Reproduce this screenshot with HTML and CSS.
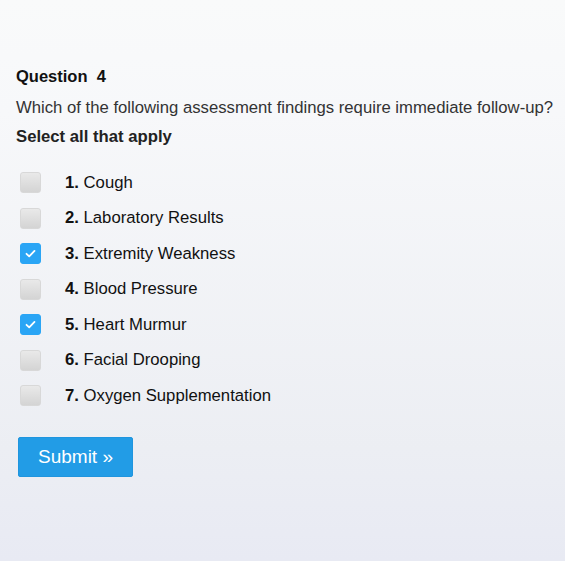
FILE: index.html
```html
<!DOCTYPE html>
<html>
<head>
<meta charset="utf-8">
<link rel="stylesheet" href="styles.css">
</head>
<body>
<div class="quiz">
  <h2 class="qtitle">Question&nbsp; 4</h2>
  <p class="qtext">Which of the following assessment findings require immediate follow-up?</p>
  <p class="qhint">Select all that apply</p>
  <ul class="options">
    <li class="opt"><span class="box"></span><span class="label"><b>1.</b> Cough</span></li>
    <li class="opt"><span class="box"></span><span class="label"><b>2.</b> Laboratory Results</span></li>
    <li class="opt"><span class="box checked"><svg viewBox="0 0 21 21" width="21" height="21"><path d="M6.5 10.8 L9.2 13.4 L14.5 7.9" fill="none" stroke="#fff" stroke-width="1.8" stroke-linecap="round" stroke-linejoin="round"/></svg></span><span class="label"><b>3.</b> Extremity Weakness</span></li>
    <li class="opt"><span class="box"></span><span class="label"><b>4.</b> Blood Pressure</span></li>
    <li class="opt"><span class="box checked"><svg viewBox="0 0 21 21" width="21" height="21"><path d="M6.5 10.8 L9.2 13.4 L14.5 7.9" fill="none" stroke="#fff" stroke-width="1.8" stroke-linecap="round" stroke-linejoin="round"/></svg></span><span class="label"><b>5.</b> Heart Murmur</span></li>
    <li class="opt"><span class="box"></span><span class="label"><b>6.</b> Facial Drooping</span></li>
    <li class="opt"><span class="box"></span><span class="label"><b>7.</b> Oxygen Supplementation</span></li>
  </ul>
  <button class="submit">Submit &raquo;</button>
</div>
</body>
</html>
```
FILE: styles.css
```css
html, body {
  margin: 0;
  padding: 0;
  height: 100%;
}
body {
  background: linear-gradient(to bottom, #f9fafa 0%, #f7f8fa 20%, #eceef3 80%, #e8eaf3 100%);
  font-family: "Liberation Sans", Arial, sans-serif;
  color: #222;
}
.quiz {
  padding: 66px 16px 0 16px;
}
.qtitle {
  margin: 0;
  font-size: 16.5px;
  font-weight: bold;
  color: #111;
  line-height: 20px;
}
.qtext {
  margin: 12px 0 0 0;
  font-size: 16.7px;
  line-height: 20px;
  color: #333;
  white-space: nowrap;
}
.qhint {
  margin: 9px 0 0 0;
  font-size: 16.7px;
  font-weight: bold;
  line-height: 20px;
  color: #222;
}
.options {
  list-style: none;
  margin: 18px 0 0 0;
  padding: 0;
}
.opt {
  display: flex;
  align-items: center;
  height: 35.5px;
}
.box {
  width: 21px;
  height: 21px;
  margin-left: 4px;
  border-radius: 3px;
  border: 1px solid #d8d8d8;
  background: linear-gradient(to bottom, #e9e9e9, #d4d4d4);
  box-sizing: border-box;
  display: flex;
}
.box.checked {
  background: #2aa5f5;
  border-color: #2aa5f5;
}
.box svg {
  display: block;
  margin: -1px;
}
.label {
  margin-left: 24px;
  font-size: 16.7px;
  color: #111;
}
.submit {
  margin: 23px 0 0 2px;
  width: 115px;
  height: 40px;
  background: #229ce6;
  border: 1px solid #1f95de;
  border-radius: 2px;
  color: #fff;
  font-family: "Liberation Sans", Arial, sans-serif;
  font-size: 19px;
  padding: 0;
}
```
